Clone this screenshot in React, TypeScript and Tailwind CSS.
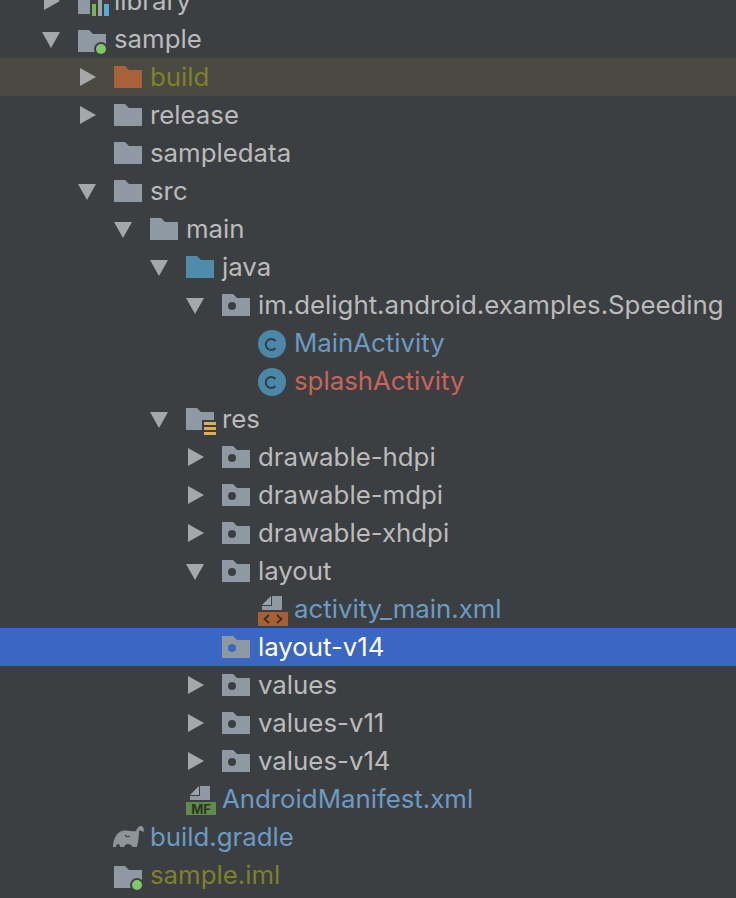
import React from "react";

const F = "M0 8h11l4 4h13v18H0z";
const FM = "M0 10h11l4 4h13v18H0z";
const G = "#8e99a4";

function Svg({ children }: { children: React.ReactNode }) {
  return (
    <svg width={36} height={38} viewBox="0 0 36 38" className="shrink-0 overflow-visible">
      {children}
    </svg>
  );
}

function Page() {
  return (
    <>
      <path d="M4 15 13 6v9z" fill="#9aa3ac" />
      <path d="M14 6h10v14H4v-4h10z" fill={G} />
    </>
  );
}

function Icon({ kind }: { kind: string }) {
  switch (kind) {
    case "lib":
      return (
        <Svg>
          <path d="M0 8h12v24H0z" fill={G} />
          <rect x="14" y="22" width="4" height="12" fill="#7fb24f" />
          <rect x="20" y="16" width="4" height="18" fill="#9aa2aa" />
          <rect x="26" y="22" width="5" height="12" fill="#5aa9d6" />
        </Svg>
      );
    case "module":
    case "iml":
      return (
        <Svg>
          <path d={FM} fill={G} />
          <circle cx="23" cy="29" r="7" fill="#3c3f41" />
          <circle cx="23" cy="29" r="5" fill="#81c566" />
        </Svg>
      );
    case "build":
      return <Svg><path d={F} fill="#a8623a" /></Svg>;
    case "java":
      return <Svg><path d={F} fill="#4f8cab" /></Svg>;
    case "pkg":
      return (
        <Svg>
          <path d={F} fill={G} />
          <circle cx="10" cy="20" r="4" fill="#3c3f41" />
        </Svg>
      );
    case "pkgSel":
      return (
        <Svg>
          <path d={F} fill={G} />
          <circle cx="10" cy="20" r="4" fill="#3a66c4" />
        </Svg>
      );
    case "res":
      return (
        <Svg>
          <path d={F} fill={G} />
          <rect x="16" y="20" width="16" height="18" fill="#3c3f41" />
          <rect x="18" y="22" width="12" height="3" fill="#dcae57" />
          <rect x="18" y="27" width="12" height="3" fill="#dcae57" />
          <rect x="18" y="32" width="12" height="3" fill="#dcae57" />
        </Svg>
      );
    case "class":
      return (
        <Svg>
          <circle cx="14" cy="20" r="14" fill="#4b88a8" />
          <path d="M17.500 17a5.500 5.500 0 1 0 0 7" fill="none" stroke="#2f3f48" strokeWidth="2" />
        </Svg>
      );
    case "xml":
      return (
        <Svg>
          <Page />
          <rect x="0" y="22" width="30" height="14" fill="#a85f33" />
          <path d="M11 25l-4.500 4 4.500 4M19 25l4.500 4-4.500 4" fill="none" stroke="#33302e" strokeWidth="1.800" />
        </Svg>
      );
    case "mf":
      return (
        <Svg>
          <Page />
          <rect x="0" y="22" width="30" height="13" fill="#5f8c48" />
          <text x="15" y="34" textAnchor="middle" fontFamily="Inter, sans-serif" fontWeight="700" fontSize="13" fill="#2c3428">MF</text>
        </Svg>
      );
    case "gradle":
      return (
        <Svg>
          <path
            d="M-1 29C-1 21 3 13 10 12.500c5-.5 9 1.500 12 .5 1-3 3-5 5-5s3.500 2.500 2.500 6l-2.500-1c0-1-2-1-2 1 0 5-1 10-2 15h-4.500c-1-2-2.500-3-4.500-3s-3 1-4 3H6c0-2-1-3-2-3s-2 1-2 3z"
            fill="#8e9499"
          />
          <path d="M11 17c1 1.500 3 2 5 1" fill="none" stroke="#3c3f41" strokeWidth="1.200" />
        </Svg>
      );
    default:
      return <Svg><path d={F} fill={G} /></Svg>;
  }
}

function Arrow({ dir }: { dir?: "r" | "d" }) {
  return (
    <div className="w-[18px] mr-[18px] h-full shrink-0">
      {dir === "r" && (
        <svg width={18} height={38} viewBox="0 0 18 38"><path d="M2 10l16 9-16 9z" fill="#a5a7a8" /></svg>
      )}
      {dir === "d" && (
        <svg width={18} height={38} viewBox="0 0 18 38"><path d="M0 12h18l-9 16z" fill="#a5a7a8" /></svg>
      )}
    </div>
  );
}

type R = { t: string; d: number; i: string; a?: "r" | "d"; c?: string; bg?: string };

const rows: R[] = [
  { t: "library", d: 0, i: "lib", a: "r" },
  { t: "sample", d: 0, i: "module", a: "d" },
  { t: "build", d: 1, i: "build", a: "r", c: "text-[#808029]", bg: "bg-[#4b4a42]" },
  { t: "release", d: 1, i: "f", a: "r" },
  { t: "sampledata", d: 1, i: "f" },
  { t: "src", d: 1, i: "f", a: "d" },
  { t: "main", d: 2, i: "f", a: "d" },
  { t: "java", d: 3, i: "java", a: "d" },
  { t: "im.delight.android.examples.Speeding", d: 4, i: "pkg", a: "d" },
  { t: "MainActivity", d: 5, i: "class", c: "text-[#6b9bc3]" },
  { t: "splashActivity", d: 5, i: "class", c: "text-[#c8655a]" },
  { t: "res", d: 3, i: "res", a: "d" },
  { t: "drawable-hdpi", d: 4, i: "pkg", a: "r" },
  { t: "drawable-mdpi", d: 4, i: "pkg", a: "r" },
  { t: "drawable-xhdpi", d: 4, i: "pkg", a: "r" },
  { t: "layout", d: 4, i: "pkg", a: "d" },
  { t: "activity_main.xml", d: 5, i: "xml", c: "text-[#6b9bc3]" },
  { t: "layout-v14", d: 4, i: "pkgSel", c: "text-white", bg: "bg-[#3a66c4]" },
  { t: "values", d: 4, i: "pkg", a: "r" },
  { t: "values-v11", d: 4, i: "pkg", a: "r" },
  { t: "values-v14", d: 4, i: "pkg", a: "r" },
  { t: "AndroidManifest.xml", d: 3, i: "mf", c: "text-[#6b9bc3]" },
  { t: "build.gradle", d: 1, i: "gradle", c: "text-[#6b9bc3]" },
  { t: "sample.iml", d: 1, i: "iml", c: "text-[#808029]" },
];

const depthPad = (d: number) =>
  d === 0
    ? "pl-[42px]"
    : d === 1
      ? "pl-[78px]"
      : d === 2
        ? "pl-[114px]"
        : d === 3
          ? "pl-[150px]"
          : d === 4
            ? "pl-[186px]"
            : "pl-[222px]";

export default function App() {
  return (
    <div className="h-[898px] w-[736px] overflow-hidden bg-[#3c3f41] font-['Inter',sans-serif]">
      <div className="-mt-[18px]">
        {rows.map((r) => (
          <div
            key={r.t}
            className={`flex h-[38px] items-center whitespace-nowrap text-[25.8px] ${depthPad(r.d)} ${r.bg ?? ""} ${r.c ?? "text-[#bbbbbb]"}`}
          >
            <Arrow dir={r.a} />
            <Icon kind={r.i} />
            <span>{r.t}</span>
          </div>
        ))}
      </div>
    </div>
  );
}
